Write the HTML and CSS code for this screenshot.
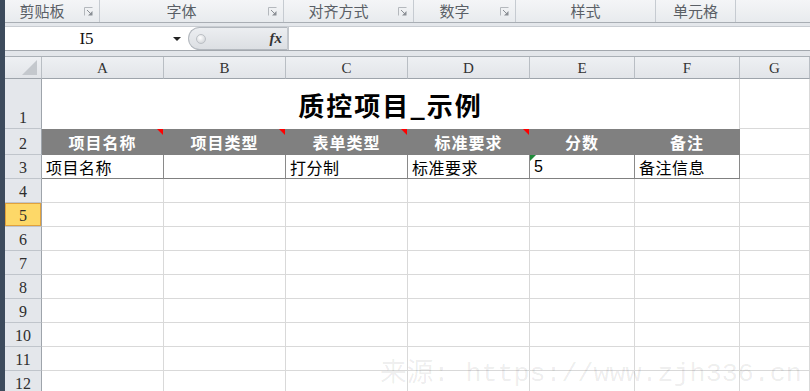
FILE: index.html
```html
<html>

<head>
    <link rel="stylesheet" href="styles.css">
</head>
<body>
    <div class="window">
        <div class="edge"></div>
        <div class="main">
            <div class="ribbon">
                <div class="group g1"><span class="label">剪贴板</span><span class="launcher"><svg width="9" height="9" viewBox="0 0 9 9"><path d="M0.5 8.5V0.5H8.5" fill="none" stroke="#b4b8bd"/><path d="M3 3L7 7" stroke="#8a8f95"/><path d="M4 8.5H8.5V4Z" fill="#8a8f95"/></svg></span></div>
                <div class="group g2"><span class="label">字体</span><span class="launcher"><svg width="9" height="9" viewBox="0 0 9 9"><path d="M0.5 8.5V0.5H8.5" fill="none" stroke="#b4b8bd"/><path d="M3 3L7 7" stroke="#8a8f95"/><path d="M4 8.5H8.5V4Z" fill="#8a8f95"/></svg></span></div>
                <div class="group g3"><span class="label">对齐方式</span><span class="launcher"><svg width="9" height="9" viewBox="0 0 9 9"><path d="M0.5 8.5V0.5H8.5" fill="none" stroke="#b4b8bd"/><path d="M3 3L7 7" stroke="#8a8f95"/><path d="M4 8.5H8.5V4Z" fill="#8a8f95"/></svg></span></div>
                <div class="group g4"><span class="label">数字</span><span class="launcher"><svg width="9" height="9" viewBox="0 0 9 9"><path d="M0.5 8.5V0.5H8.5" fill="none" stroke="#b4b8bd"/><path d="M3 3L7 7" stroke="#8a8f95"/><path d="M4 8.5H8.5V4Z" fill="#8a8f95"/></svg></span></div>
                <div class="group g5"><span class="label">样式</span></div>
                <div class="group g6"><span class="label">单元格</span></div>
                <div class="group g7"></div>
            </div>
            <div class="spacer-top"></div>
            <div class="formula">
                <div class="namebox"><span class="name">I5</span><span class="arrow"></span></div>
                <div class="fx-pill"><span class="grip"></span><span class="fx">fx</span></div>
                <div class="input"></div>
            </div>
            <div class="spacer-bottom"></div>
            <div class="sheet">
                <div class="c ch corner"></div><div class="c ch">A</div><div class="c ch">B</div><div class="c ch">C</div><div class="c ch">D</div><div class="c ch">E</div><div class="c ch">F</div><div class="c ch">G</div>

                <div class="c rh">1</div><div class="c title">质控项目_示例</div><div class="c"></div>

                <div class="c rh">2</div><div class="c hd note">项目名称</div><div class="c hd note">项目类型</div><div class="c hd note">表单类型</div><div class="c hd note">标准要求</div><div class="c hd">分数</div><div class="c hd">备注</div><div class="c"></div>

                <div class="c rh">3</div><div class="c dt">项目名称</div><div class="c dt"></div><div class="c dt">打分制</div><div class="c dt">标准要求</div><div class="c dt num green">5</div><div class="c dt">备注信息</div><div class="c"></div>

                <div class="c rh">4</div><div class="c"></div><div class="c"></div><div class="c"></div><div class="c"></div><div class="c"></div><div class="c"></div><div class="c"></div>
                <div class="c rh sel">5</div><div class="c"></div><div class="c"></div><div class="c"></div><div class="c"></div><div class="c"></div><div class="c"></div><div class="c"></div>
                <div class="c rh">6</div><div class="c"></div><div class="c"></div><div class="c"></div><div class="c"></div><div class="c"></div><div class="c"></div><div class="c"></div>
                <div class="c rh">7</div><div class="c"></div><div class="c"></div><div class="c"></div><div class="c"></div><div class="c"></div><div class="c"></div><div class="c"></div>
                <div class="c rh">8</div><div class="c"></div><div class="c"></div><div class="c"></div><div class="c"></div><div class="c"></div><div class="c"></div><div class="c"></div>
                <div class="c rh">9</div><div class="c"></div><div class="c"></div><div class="c"></div><div class="c"></div><div class="c"></div><div class="c"></div><div class="c"></div>
                <div class="c rh">10</div><div class="c"></div><div class="c"></div><div class="c"></div><div class="c"></div><div class="c"></div><div class="c"></div><div class="c"></div>
                <div class="c rh">11</div><div class="c"></div><div class="c"></div><div class="c"></div><div class="c"></div><div class="c"></div><div class="c"></div><div class="c"></div>
                <div class="c rh">12</div><div class="c"></div><div class="c"></div><div class="c"></div><div class="c"></div><div class="c"></div><div class="c"></div><div class="c"></div>
            </div>
        </div>
    </div>
    <div class="watermark">来源: https://www.zjh336.cn</div>
</body>

</html>
```

FILE: styles.css
```css
html, body {
    margin: 0;
    height: 100%;
    overflow: hidden;
    background: #fff;
}

body {
    position: relative;
    font-family: "Noto Sans CJK SC", sans-serif;
}

.window {
    display: flex;
    height: 391px;
    overflow: hidden;
}

.edge {
    width: 5px;
    flex: none;
    background: #3d4b5c;
}

.main {
    flex: 1;
    display: flex;
    flex-direction: column;
    min-width: 0;
}

.main > div {
    flex: none;
}

/* ribbon group captions */
.ribbon {
    display: flex;
    height: 23px;
    box-sizing: border-box;
    border-bottom: 1px solid #a9aeb4;
    background: linear-gradient(#f4f5f7, #e8ebee);
}

.group {
    display: flex;
    align-items: center;
    box-sizing: border-box;
    border-right: 1px solid #c6cbd1;
    font-size: 15px;
    color: #5a5f66;
}

.group .label {
    flex: 1;
    text-align: center;
    line-height: 22px;
}

.launcher {
    width: 20px;
    display: flex;
    align-items: center;
}

.launcher svg {
    margin-left: 5px;
}

.g1 { width: 95px; }
.g2 { width: 184px; }
.g3 { width: 130px; }
.g4 { width: 102px; }
.g5 { width: 140px; }
.g6 { width: 80px; }
.g7 { flex: 1; border-right: none; }

.spacer-top {
    height: 3px;
    background: #e4e7eb;
}

/* formula bar */
.formula {
    display: flex;
    height: 25px;
    box-sizing: border-box;
    border-top: 1px solid #c9cdd2;
    border-bottom: 1px solid #a3a8ae;
    background: #fff;
}

.namebox {
    width: 183px;
    display: flex;
    align-items: center;
}

.namebox .name {
    width: 163px;
    text-align: center;
    font-family: "Liberation Serif", serif;
    font-size: 17px;
    color: #111;
}

.arrow {
    width: 0;
    height: 0;
    margin-left: 5px;
    border-left: 4px solid transparent;
    border-right: 4px solid transparent;
    border-top: 4px solid #222;
}

.fx-pill {
    width: 100px;
    box-sizing: border-box;
    display: flex;
    align-items: center;
    justify-content: space-between;
    padding: 0 5px 0 7px;
    background: linear-gradient(#eceef1, #dcdfe3);
    border: 1px solid #b3b8be;
    border-right-color: #c4c8cd;
    border-radius: 12px 0 0 12px;
}

.grip {
    width: 8px;
    height: 8px;
    border-radius: 50%;
    border: 1px solid #bcc0c5;
    background: radial-gradient(circle at 40% 35%, #ffffff, #c7cbd0);
}

.fx {
    font-family: "Liberation Serif", serif;
    font-style: italic;
    font-weight: bold;
    font-size: 15px;
    color: #333;
}

.input {
    flex: 1;
    border-left: 1px solid #c2c6cb;
}

.spacer-bottom {
    height: 5px;
    background: #e3e6ea;
}

/* worksheet grid */
.sheet {
    display: grid;
    grid-template-columns: 37px 122px 122px 122px 122px 105px 105px 1fr;
    grid-template-rows: 22px 50px 26px repeat(10, 24px);
    border-top: 1px solid #aab0b6;
}

.c {
    position: relative;
    box-sizing: border-box;
    border-right: 1px solid #d9d9d9;
    border-bottom: 1px solid #d9d9d9;
}

.ch {
    display: flex;
    align-items: center;
    justify-content: center;
    padding-top: 2px;
    background: linear-gradient(#eef0f3, #e2e5e9);
    border-right-color: #b9bec4;
    border-bottom-color: #9ea4ab;
    font-family: "Liberation Serif", serif;
    font-size: 15px;
    color: #333;
}

.corner::after {
    content: "";
    position: absolute;
    right: 4px;
    bottom: 3px;
    border-bottom: 15px solid #c4c8cd;
    border-left: 15px solid transparent;
}

.rh {
    display: flex;
    align-items: flex-end;
    justify-content: center;
    padding-bottom: 1px;
    background: #e4e7eb;
    border-right-color: #9ea4ab;
    border-bottom-color: #c0c5cb;
    font-family: "Liberation Serif", serif;
    font-size: 16px;
    line-height: 18px;
    color: #2e2e2e;
}

.sel {
    background: #fdd868;
    box-shadow: inset 0 0 0 1px #e1a23c;
}

.title {
    grid-column: span 6;
    display: flex;
    align-items: center;
    justify-content: center;
    border-bottom: none;
    font-size: 26px;
    font-weight: 700;
    letter-spacing: 2px;
    color: #000;
}

.hd {
    display: flex;
    align-items: center;
    justify-content: center;
    background: #808080;
    border-color: #808080;
    color: #fff;
    font-size: 16px;
    font-weight: 700;
    letter-spacing: 1px;
}

.note::after {
    content: "";
    position: absolute;
    top: 0;
    right: 0;
    border-top: 6px solid #ff0000;
    border-left: 6px solid transparent;
}

.dt {
    display: flex;
    align-items: center;
    padding-left: 4px;
    border-right-color: #8a8a8a;
    border-bottom-color: #808080;
    font-size: 16px;
    letter-spacing: 0.5px;
    color: #000;
}

.num {
    font-family: "Liberation Sans", sans-serif;
}

.green::before {
    content: "";
    position: absolute;
    top: 0;
    left: 0;
    border-top: 6px solid #1f8b3a;
    border-right: 6px solid transparent;
}

.watermark {
    position: absolute;
    left: 380px;
    top: 358px;
    font-family: "Liberation Mono", "Noto Sans CJK SC", monospace;
    font-size: 26.7px;
    line-height: 32px;
    white-space: pre;
    color: rgba(0, 0, 0, 0.08);
    pointer-events: none;
}
```
